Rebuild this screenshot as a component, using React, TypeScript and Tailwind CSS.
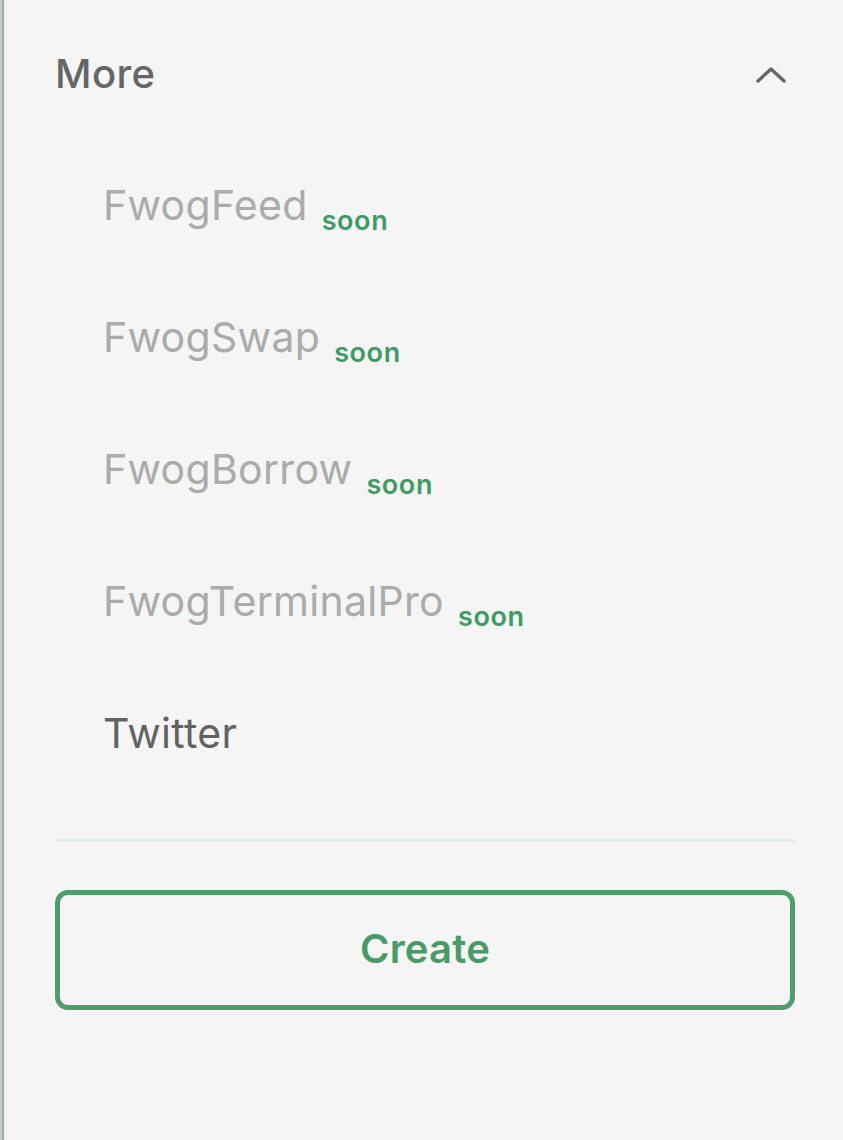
import React from "react";

const items: { label: string; soon: boolean }[] = [
  { label: "FwogFeed", soon: true },
  { label: "FwogSwap", soon: true },
  { label: "FwogBorrow", soon: true },
  { label: "FwogTerminalPro", soon: true },
  { label: "Twitter", soon: false },
];

export default function App() {
  return (
    <div
      className="w-[843px] h-[1140px] bg-[#f5f5f5] flex overflow-hidden"
      style={{ fontFamily: "Inter, 'Noto Sans', sans-serif" }}
    >
      <div className="w-[2px] bg-[#c9c9c9]" />
      <div className="w-[2px] bg-[#a7a7a7]" />
      <div className="w-[1px] bg-[#f2f4f3]" />
      <div className="w-[2px] bg-[#e6eeeb]" />
      <div className="flex-1 flex flex-col pl-[48px] pr-[48px]">
        <div className="mt-[54px] flex items-center justify-between h-[40px]">
          <span className="text-[40px] leading-none font-medium text-[#666666] tracking-[0.4px]">
            More
          </span>
          <svg
            width="32"
            height="20"
            viewBox="0 0 32 20"
            className="mr-[8px] mt-[2px]"
          >
            <path
              d="M3 16 L16 4 L29 16"
              fill="none"
              stroke="#666666"
              strokeWidth="3.4"
              strokeLinecap="round"
              strokeLinejoin="round"
            />
          </svg>
        </div>
        <div className="flex flex-col pl-[48px] mt-[91px]">
          {items.map((it) => (
            <div key={it.label} className="h-[132px]">
              <span
                className={
                  "text-[41px] leading-none tracking-[0.3px] " +
                  (it.soon ? "text-[#ababab]" : "text-[#626262]")
                }
              >
                {it.label}
              </span>
              {it.soon && (
                <span className="ml-[14px] text-[27px] leading-none font-semibold text-[#3f9b64] tracking-[0.6px] align-[-10px]">
                  soon
                </span>
              )}
            </div>
          ))}
        </div>
        <div className="mt-[-6px] h-[3px] bg-[#e5ecea] rounded-full" />
        <button className="mt-[48px] h-[120px] border-[5px] border-[#4e9d6b] rounded-[13px] flex items-center justify-center">
          <span className="text-[40px] font-semibold text-[#4a9a66] tracking-[0.2px] leading-none mb-[2px]">
            Create
          </span>
        </button>
      </div>
    </div>
  );
}
